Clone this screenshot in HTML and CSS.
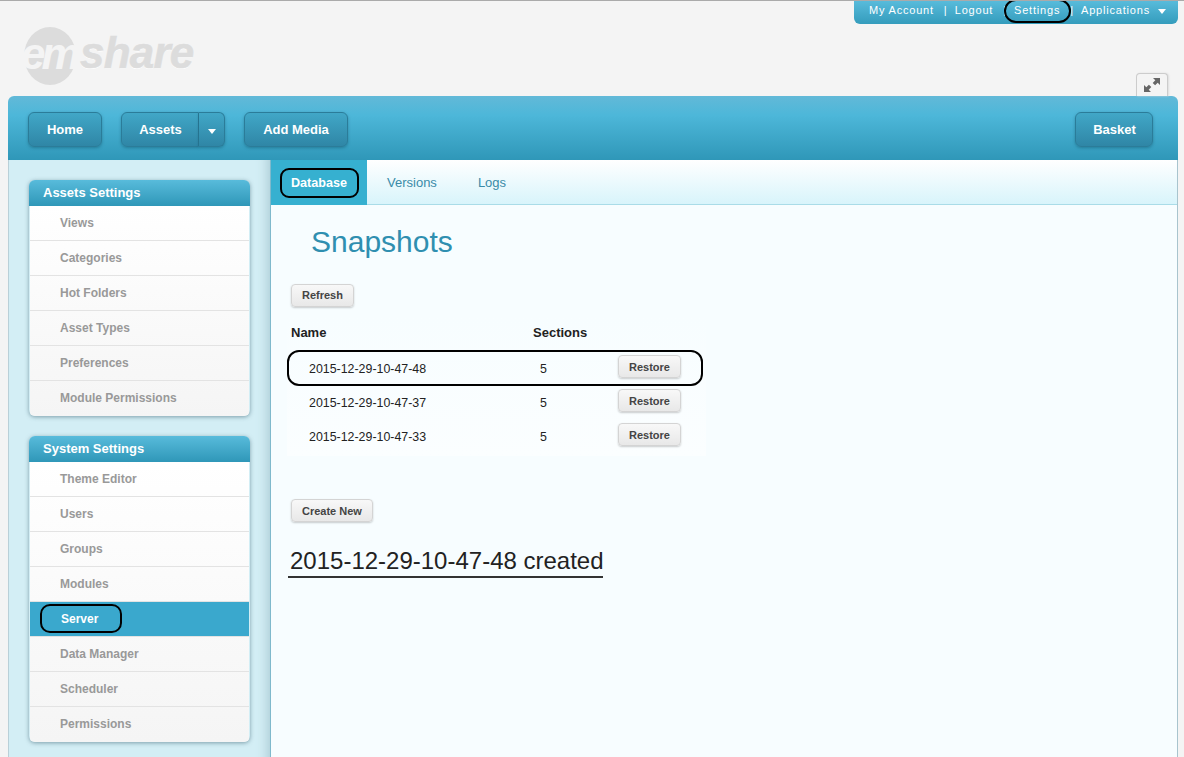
FILE: index.html
```html
<!DOCTYPE html>
<html>
	<head>
		<meta charset="UTF-8">
		<title>Snapshots</title>
		<link rel="stylesheet" href="styles.css">
	</head>
	<body>
		<div class="page">
			<div class="header">
				<div class="usermenu">
					<a>My Account</a><span class="sep">|</span>
					<a>Logout</a><span class="sep">|</span>
					<a class="ringed">Settings<span class="ring ring-settings"></span></a><span class="sep">|</span>
					<a>Applications</a><span class="arrow"></span>
				</div>
				<div class="brandrow">
					<div class="logo">
						<span class="logo-disc">em</span><span class="logo-share">share</span>
					</div>
					<div class="expand">
						<svg width="18" height="18" viewBox="0 0 18 18">
							<path d="M10 2h7v7l-2.3-2.3-2.6 2.6-2.4-2.4 2.6-2.6z" fill="#666"/>
							<path d="M8 16H1V9l2.3 2.3 2.6-2.6 2.4 2.4-2.6 2.6z" fill="#666"/>
						</svg>
					</div>
				</div>
			</div>

			<div class="panel">
				<div class="toolbar">
					<a class="btn">Home</a>
					<div class="split">
						<a class="btn btn-main">Assets</a>
						<a class="btn btn-drop"><span class="arrow"></span></a>
					</div>
					<a class="btn btn-media">Add Media</a>
					<a class="btn btn-basket">Basket</a>
				</div>

				<div class="columns">
					<div class="sidebar">
						<div class="card">
							<div class="card-title">Assets Settings</div>
							<ul class="card-list">
								<li>Views</li>
								<li>Categories</li>
								<li>Hot Folders</li>
								<li>Asset Types</li>
								<li>Preferences</li>
								<li>Module Permissions</li>
							</ul>
						</div>
						<div class="card">
							<div class="card-title">System Settings</div>
							<ul class="card-list">
								<li>Theme Editor</li>
								<li>Users</li>
								<li>Groups</li>
								<li>Modules</li>
								<li class="current">Server<span class="ring ring-server"></span></li>
								<li>Data Manager</li>
								<li>Scheduler</li>
								<li>Permissions</li>
							</ul>
						</div>
					</div>

					<div class="content">
						<div class="tabs">
							<a class="tab tab-on">Database<span class="ring ring-tab"></span></a>
							<a class="tab">Versions</a>
							<a class="tab">Logs</a>
						</div>
						<div class="body">
							<h1 class="title">Snapshots</h1>
							<a class="small-btn">Refresh</a>
							<div class="snapshots">
								<div class="snap-head">
									<span class="col-name">Name</span>
									<span class="col-sections">Sections</span>
								</div>
								<div class="snap-row">
									<span class="col-name">2015-12-29-10-47-48</span>
									<span class="col-sections">5</span>
									<a class="small-btn">Restore</a>
									<span class="ring ring-row"></span>
								</div>
								<div class="snap-row">
									<span class="col-name">2015-12-29-10-47-37</span>
									<span class="col-sections">5</span>
									<a class="small-btn">Restore</a>
								</div>
								<div class="snap-row">
									<span class="col-name">2015-12-29-10-47-33</span>
									<span class="col-sections">5</span>
									<a class="small-btn">Restore</a>
								</div>
							</div>
							<a class="small-btn create">Create New</a>
							<div class="created">2015-12-29-10-47-48 created</div>
						</div>
					</div>
				</div>
			</div>
		</div>
	</body>
</html>
```

FILE: styles.css
```css
html, body {
	margin: 0;
	padding: 0;
}

body {
	background: #f4f4f4;
	font-family: "Liberation Sans", Arial, sans-serif;
	border-top: 1px solid #aaa;
}

ul {
	margin: 0;
	padding: 0;
	list-style: none;
}

.page {
	padding: 0 6px 0 8px;
}

/* top of page */
.header {
	height: 95px;
	display: flex;
	flex-direction: column;
}

.usermenu {
	align-self: flex-end;
	display: flex;
	align-items: center;
	height: 23px;
	width: 324px;
	box-sizing: border-box;
	padding: 0 0 5px 15px;
	background: linear-gradient(#58bbdb, #349cbc);
	border-radius: 0 0 6px 6px;
	color: #fff;
	font-size: 11px;
	letter-spacing: 0.8px;
}

.sep {
	margin: 0 8px 0 10px;
	letter-spacing: 0;
}

.ringed {
	position: relative;
}

.arrow {
	display: inline-block;
	width: 0;
	height: 0;
	border: 4px solid transparent;
	border-top: 5px solid #fff;
	border-bottom: 0;
}

.usermenu .arrow {
	margin: 2px 0 0 8px;
}

.ring {
	position: absolute;
	box-sizing: border-box;
	border: 2px solid #000;
	border-radius: 10px;
}

.ring-settings {
	left: -10px;
	top: -5px;
	width: 67px;
	height: 24px;
	border-radius: 12px;
}

.brandrow {
	flex: 1;
	display: flex;
	justify-content: space-between;
	align-items: flex-end;
	padding-right: 10px;
}

.logo {
	display: flex;
	align-items: center;
	align-self: flex-start;
	margin: 3px 0 0 16px;
}

/* the e runs off the disc on the left and melts into the page colour */
.logo-disc {
	display: block;
	width: 52px;
	height: 58px;
	border-radius: 50%;
	background: #dcdcdc;
	color: #f4f4f4;
	font-size: 44px;
	line-height: 53px;
	font-weight: bold;
	font-style: italic;
	letter-spacing: -4px;
	text-indent: -3px;
	white-space: nowrap;
}

.logo-share {
	margin: -6px 0 0 4px;
	color: #dcdcdc;
	font-size: 44px;
	font-weight: bold;
	font-style: italic;
	letter-spacing: -0.8px;
	-webkit-text-stroke: 0.6px #dcdcdc;
	text-shadow: 0 1px 0 #fff;
}

.expand {
	width: 30px;
	height: 22px;
	display: flex;
	justify-content: center;
	align-items: center;
	background: #f4f4f4;
	border: 1px solid #ccc;
	border-bottom: 0;
	border-radius: 4px 4px 0 0;
	box-shadow: 1px 0 2px #ddd;
}

/* blue panel */
.panel {
	border-radius: 6px 6px 0 0;
	overflow: hidden;
}

.toolbar {
	height: 64px;
	box-sizing: border-box;
	padding: 16px 25px 0 20px;
	display: flex;
	align-items: flex-start;
	background: linear-gradient(#62b9d8 0, #4db7d9 30%, #2f97b8 100%);
}

.btn {
	height: 35px;
	box-sizing: border-box;
	display: flex;
	align-items: center;
	justify-content: center;
	width: 74px;
	color: #fff;
	font-size: 13px;
	font-weight: bold;
	background: linear-gradient(#41a7c7, #2f86a6);
	border: 1px solid #2b7c99;
	border-radius: 6px;
	box-shadow: 0 1px 3px rgba(0, 60, 80, 0.35);
}

.split {
	display: flex;
	margin-left: 19px;
}

.btn-main {
	width: 78px;
	padding-left: 1px;
	border-radius: 6px 0 0 6px;
}

.btn-drop {
	width: 26px;
	border-left: 0;
	border-radius: 0 6px 6px 0;
	padding-top: 3px;
}

.btn-media {
	width: 104px;
	margin-left: 19px;
}

.btn-basket {
	width: 78px;
	padding-left: 1px;
	margin-left: auto;
}

.columns {
	display: flex;
	min-height: 620px;
}

.sidebar {
	width: 262px;
	box-sizing: border-box;
	padding: 20px 20px 0 21px;
	background: #d3eef5;
	border-left: 1px solid #b9d0d8;
	box-shadow: inset -14px 0 12px -12px #a9c8d2;
}

.card {
	width: 221px;
	margin-bottom: 20px;
	margin-left: -1px;
	border-radius: 6px;
	box-shadow: 0 1px 4px rgba(40, 80, 95, 0.5);
	overflow: hidden;
}

.card-title {
	height: 26px;
	line-height: 25px;
	padding-left: 14px;
	color: #fff;
	font-size: 13px;
	font-weight: bold;
	background: linear-gradient(#58bbdb, #2f97b8);
}

.card-list {
	background: linear-gradient(#fff, #f5f5f5);
	margin: 0 1px;
}

.card-list li {
	position: relative;
	height: 35px;
	line-height: 34px;
	box-sizing: border-box;
	padding-left: 30px;
	border-bottom: 1px solid #e3e3e3;
	color: #999;
	font-size: 12px;
	font-weight: bold;
}

.card-list li:last-child {
	border-bottom: 0;
}

.card-list .current {
	background: #3aa8cd;
	color: #fff;
	padding-left: 31px;
}

.ring-server {
	left: 10px;
	top: 2px;
	width: 82px;
	height: 29px;
}

/* right column */
.content {
	flex: 1;
	background: #f7fdff;
	border-left: 1px solid #7fb9cc;
	border-right: 1px solid #a8c4ce;
}

.tabs {
	height: 45px;
	box-sizing: border-box;
	display: flex;
	background: linear-gradient(#fff, #d8f4fb);
	border-bottom: 1px solid #a9dce8;
}

.tab {
	position: relative;
	display: flex;
	align-items: center;
	padding: 0 20px;
	color: #3a8ba8;
	font-size: 13px;
}

.tab:last-child {
	margin-left: 1px;
}

.tab-on {
	width: 96px;
	box-sizing: border-box;
	height: 45px;
	padding-top: 1px;
	background: #36b0d0;
	color: #fff;
	font-size: 12.6px;
	font-weight: bold;
}

.ring-tab {
	left: 9px;
	top: 8px;
	width: 79px;
	height: 30px;
	border-radius: 9px;
}

.body {
	padding: 0 0 0 20px;
}

.title {
	margin: 0;
	padding: 18px 0 0 20px;
	height: 61px;
	box-sizing: border-box;
	color: #2f8fb0;
	font-size: 30px;
	line-height: 38px;
	font-weight: normal;
}

.small-btn {
	display: inline-block;
	height: 23px;
	line-height: 21px;
	box-sizing: border-box;
	padding: 0 10px;
	margin-top: 18px;
	color: #444;
	font-size: 11px;
	font-weight: bold;
	background: linear-gradient(#f8f8f8, #e8e8e8);
	border: 1px solid #d4d4d4;
	border-radius: 4px;
	box-shadow: 0 1px 2px rgba(0, 0, 0, 0.2);
}

.snapshots {
	width: 419px;
	margin: 9px 0 0 -4px;
	padding-bottom: 4px;
	background: linear-gradient(#f7fdff, #fbfeff);
}

.snap-head {
	display: flex;
	height: 34px;
	box-sizing: border-box;
	padding: 9px 0 0 4px;
	color: #222;
	font-size: 13px;
	line-height: 15px;
	font-weight: bold;
}

.snap-head .col-name {
	width: 242px;
}

.snap-row {
	position: relative;
	display: flex;
	align-items: center;
	height: 34px;
	color: #222;
	font-size: 12.4px;
}

.snap-row .col-name {
	width: 231px;
	padding: 4px 0 0 22px;
}

.snap-row .col-sections {
	width: 78px;
	padding-top: 4px;
}

.snap-row .small-btn {
	margin: 0 0 1px;
	line-height: 22px;
}

.ring-row {
	left: 0;
	top: 0;
	width: 416px;
	height: 36px;
	border-radius: 12px;
}

.create {
	margin-top: 43px;
	line-height: 22px;
}

.created {
	width: 313px;
	margin: 25px 0 0 -3px;
	padding: 0 0 1px 2px;
	color: #222;
	font-size: 24px;
	line-height: 28px;
	border-bottom: 2px solid #333;
	white-space: nowrap;
}
```
